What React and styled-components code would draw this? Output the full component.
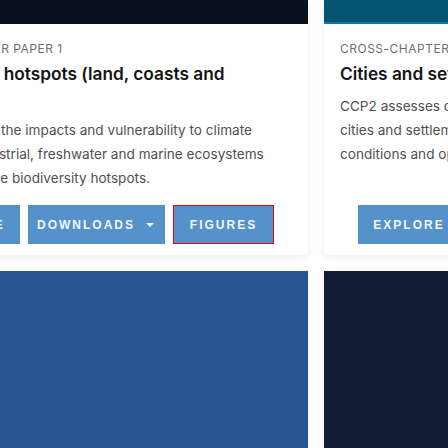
import React from "react";
import styled, { createGlobalStyle } from "styled-components";

const Global = createGlobalStyle`
  html, body {
    margin: 0;
    padding: 0;
    background: #ffffff;
    overflow: hidden;
  }
  body {
    font-family: Inter, "Noto Sans", sans-serif;
  }
`;

const Track = styled.div`
  display: grid;
  grid-template-columns: repeat(2, 424px);
  column-gap: 16px;
  row-gap: 16px;
  margin-left: -116px;
  width: 864px;
`;

const Card = styled.article`
  display: flex;
  flex-direction: column;
  background: #ffffff;
  border-radius: 0 0 4px 4px;
  box-shadow: 0 2px 9px rgba(0, 0, 0, 0.08);
`;

const Cover = styled.div`
  height: ${(p) => p.$h}px;
  background: ${(p) => p.$bg};
  box-sizing: border-box;
  border-bottom: ${(p) => (p.$stripe ? `2px solid ${p.$stripe}` : "none")};
`;

const Body = styled.div`
  display: flex;
  flex-direction: column;
  flex: 1;
  padding: 17px 16px 11px;
`;

const Label = styled.div`
  font-size: 12px;
  line-height: 16px;
  letter-spacing: 0.5px;
  color: #6f6f6f;
  text-transform: uppercase;
  white-space: nowrap;
`;

const Title = styled.h3`
  margin: 5px 0 0;
  font-size: 17.3px;
  line-height: 24px;
  font-weight: 600;
  color: #141414;
  white-space: nowrap;
`;

const Text = styled.p`
  margin: 8px 0 0;
  font-size: 13.6px;
  line-height: 24px;
  color: #505050;
  white-space: nowrap;
`;

const Actions = styled.div`
  display: flex;
  justify-content: center;
  gap: 8px;
  margin-top: auto;
  padding-top: 15px;
`;

const Button = styled.button`
  display: flex;
  align-items: center;
  justify-content: center;
  gap: 11px;
  width: ${(p) => p.$w}px;
  height: 39px;
  padding: 0;
  border: none;
  background: #5592cc;
  color: #f4f6fa;
  font-family: "Liberation Sans", Arial, sans-serif;
  font-weight: 700;
  font-size: 12px;
  letter-spacing: 2px;
  text-transform: uppercase;
  outline: ${(p) => (p.$active ? "1px solid #ee0000" : "none")};
  outline-offset: -1px;
  cursor: pointer;
`;

const Caret = styled.span`
  width: 0;
  height: 0;
  border-left: 4px solid transparent;
  border-right: 4px solid transparent;
  border-top: 4px solid #f4f6fa;
  margin-right: 2px;
`;

const cards = [
  {
    cover: "#08111c",
    label: "Cross-Chapter Paper 1",
    title: ["Biodiversity hotspots (land, coasts and", "ocean)"],
    text: [
      "CCP1 assesses the impacts and vulnerability to climate",
      "change of terrestrial, freshwater and marine ecosystems",
      "considered to be biodiversity hotspots.",
    ],
  },
  {
    cover: "#045574",
    stripe: "#0b77aa",
    label: "Cross-Chapter Paper 2",
    title: ["Cities and settlements by the sea"],
    text: [
      "CCP2 assesses climate risks to coastal",
      "cities and settlements by the sea and the",
      "conditions and options for adaptation.",
    ],
  },
];

const Lines = ({ items }) =>
  items.map((t, j) => (
    <React.Fragment key={j}>
      {j > 0 && <br />}
      {t}
    </React.Fragment>
  ));

export default function App() {
  return (
    <>
      <Global />
      <Track>
        {cards.map((c, i) => (
          <Card key={i}>
            <Cover $h={24} $bg={c.cover} $stripe={c.stripe} />
            <Body>
              <Label>{c.label}</Label>
              <Title>
                <Lines items={c.title} />
              </Title>
              <Text>
                <Lines items={c.text} />
              </Text>
              <Actions>
                <Button $w={102}>Explore</Button>
                <Button $w={137}>
                  Downloads
                  <Caret />
                </Button>
                <Button $w={101} $active={i === 0}>
                  Figures
                </Button>
              </Actions>
            </Body>
          </Card>
        ))}
        <Card>
          <Cover $h={220} $bg="#26558f" />
        </Card>
        <Card>
          <Cover $h={220} $bg="#121b33" />
        </Card>
      </Track>
    </>
  );
}
